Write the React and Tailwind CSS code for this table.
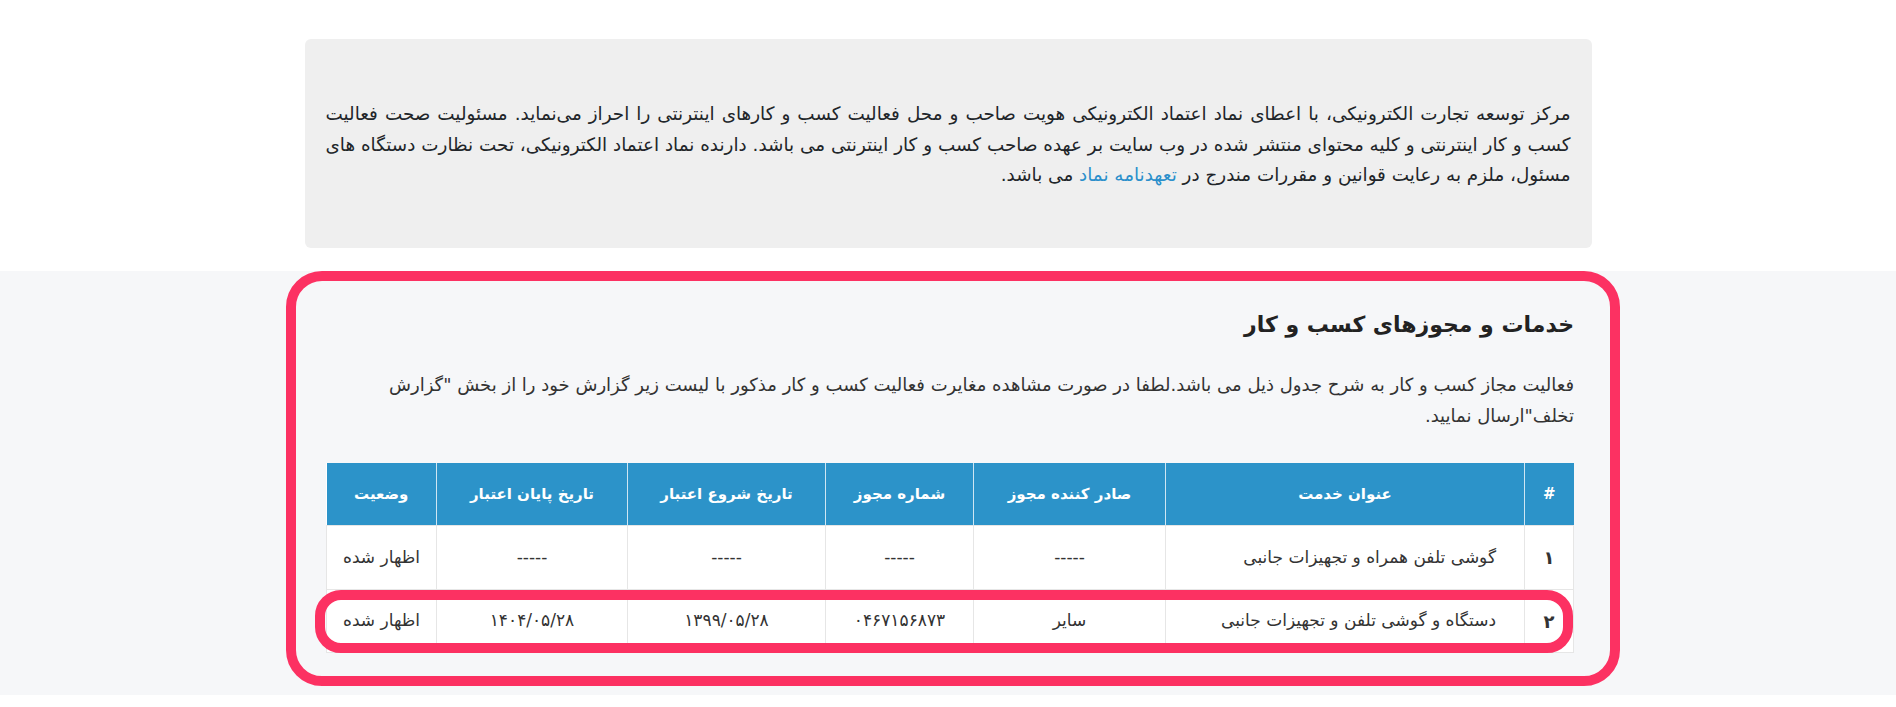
import React from 'react';

const rows = [
  {
    n: '۱',
    title: 'گوشی تلفن همراه و تجهیزات جانبی',
    issuer: '-----',
    number: '-----',
    start: '-----',
    end: '-----',
    status: 'اظهار شده',
  },
  {
    n: '۲',
    title: 'دستگاه و گوشی تلفن و تجهیزات جانبی',
    issuer: 'سایر',
    number: '۰۴۶۷۱۵۶۸۷۳',
    start: '۱۳۹۹/۰۵/۲۸',
    end: '۱۴۰۴/۰۵/۲۸',
    status: 'اظهار شده',
  },
];

export default function App() {
  return (
    <div dir="rtl" className="min-h-[707px] bg-white font-['DejaVu_Sans',sans-serif] text-[#212529]">
      {/* Enamad notice */}
      <div className="pt-[39px] pb-[23px]">
        <div className="mx-auto w-[1287px] rounded-md bg-[#efefef] px-[21px] pt-[60px] pb-[57px]">
          <p className="text-justify text-[18.35px] leading-[30.5px]">
            مرکز توسعه تجارت الکترونیکی، با اعطای نماد اعتماد الکترونیکی هویت صاحب و محل فعالیت کسب و کارهای اینترنتی را احراز
            می‌نماید. مسئولیت صحت فعالیت کسب و کار اینترنتی و کلیه محتوای منتشر شده در وب سایت بر عهده صاحب کسب و کار اینترنتی
            می باشد. دارنده نماد اعتماد الکترونیکی، تحت نظارت دستگاه های مسئول، ملزم به رعایت قوانین و مقررات مندرج در{' '}
            <a className="text-[#2b8fcb]">تعهدنامه نماد</a> می باشد.
          </p>
        </div>
      </div>

      {/* Services & licenses */}
      <div className="bg-[#f6f7f9] pb-[9px]">
        <div className="mr-[276px] w-[1334px] rounded-[36px] border-[10px] border-[#fc3162] pt-[24px] pr-[36px] pl-[30px] pb-[23px]">
          <h2 className="text-[22px] font-bold leading-[40px] text-[#222]">خدمات و مجوزهای کسب و کار</h2>
          <p className="mt-[24px] text-[18px] leading-[31px] text-[#333]">
            فعالیت مجاز کسب و کار به شرح جدول ذیل می باشد.لطفا در صورت مشاهده مغایرت فعالیت کسب و کار مذکور با لیست زیر گزارش
            خود را از بخش "گزارش تخلف"ارسال نمایید.
          </p>

          <div className="relative mt-[32px]">
            <table className="w-full border-collapse bg-white text-center">
              <thead>
                <tr className="h-[63px] bg-[#2c93c9] text-[15px] font-bold text-white">
                  <th className="w-[49px] border-l border-[#cfe6f3]">#</th>
                  <th className="w-[359px] border-l border-[#cfe6f3]">عنوان خدمت</th>
                  <th className="w-[192px] border-l border-[#cfe6f3]">صادر کننده مجوز</th>
                  <th className="w-[148px] border-l border-[#cfe6f3]">شماره مجوز</th>
                  <th className="w-[198px] border-l border-[#cfe6f3]">تاریخ شروع اعتبار</th>
                  <th className="w-[191px] border-l border-[#cfe6f3]">تاریخ پایان اعتبار</th>
                  <th>وضعیت</th>
                </tr>
              </thead>
              <tbody className="text-[17px] text-[#333]">
                {rows.map((r, i) => (
                  <tr key={i} className={i === 0 ? 'h-[64px]' : 'h-[63px]'}>
                    <td className="border border-[#e6e6e6] text-[18px] font-bold">{r.n}</td>
                    <td className="border border-[#e6e6e6] pr-[28px] text-right">{r.title}</td>
                    <td className="border border-[#e6e6e6]">{r.issuer}</td>
                    <td className="border border-[#e6e6e6]">{r.number}</td>
                    <td className="border border-[#e6e6e6]">{r.start}</td>
                    <td className="border border-[#e6e6e6]">{r.end}</td>
                    <td className="border border-[#e6e6e6]">{r.status}</td>
                  </tr>
                ))}
              </tbody>
            </table>
            {/* highlight around the second row */}
            <div className="pointer-events-none absolute top-[127px] right-[1px] h-[63px] w-[1258px] rounded-[26px] border-[10px] border-[#fc3162]" />
          </div>
        </div>
      </div>
    </div>
  );
}
